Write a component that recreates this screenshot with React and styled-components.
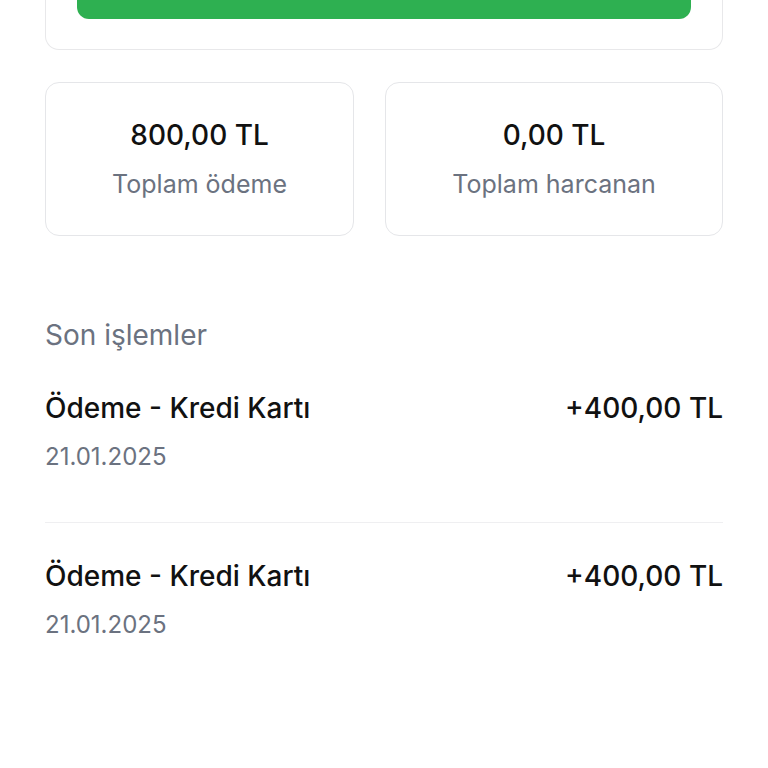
import React from 'react';
import styled, { createGlobalStyle } from 'styled-components';

const GlobalStyle = createGlobalStyle`
  body {
    margin: 0;
    background: #ffffff;
    font-family: Inter, "Noto Sans", sans-serif;
    color: #111111;
  }
`;

const Page = styled.div`
  padding: 0 45px;
  overflow: hidden;
  height: 768px;
  box-sizing: border-box;
`;

const TopCard = styled.div`
  margin-top: -60px;
  padding: 24px 31px 30px;
  border: 1.5px solid #e8e8ea;
  border-top: none;
  border-radius: 0 0 14px 14px;
`;

const PayButton = styled.div`
  height: 55px;
  border-radius: 12px;
  background: #2eb051;
`;

const Stats = styled.div`
  display: flex;
  gap: 31px;
  margin-top: 32px;
`;

const StatCard = styled.div`
  flex: ${(p) => p.$grow} 1 0;
  height: 154px;
  box-sizing: border-box;
  border: 1.5px solid #e5e6e9;
  border-radius: 14px;
  display: flex;
  flex-direction: column;
  align-items: center;
  justify-content: center;
  gap: 12px;
`;

const StatValue = styled.div`
  font-size: 28px;
  font-weight: 500;
  color: #111111;
  line-height: 38px;
`;

const StatLabel = styled.div`
  font-size: 25px;
  color: #6b7280;
  line-height: 36px;
`;

const SectionTitle = styled.div`
  margin-top: 80px;
  font-size: 28px;
  color: #6b7280;
  line-height: 38px;
`;

const List = styled.div`
  margin-top: 36px;
`;

const Row = styled.div`
  display: flex;
  justify-content: space-between;
  align-items: flex-start;
  padding: ${(p) => (p.$first ? '0' : '35px')} 0 48px;
  border-bottom: ${(p) => (p.$last ? 'none' : '1.5px solid #efeff1')};
`;

const RowMain = styled.div`
  display: flex;
  flex-direction: column;
  gap: 14px;
`;

const RowTitle = styled.div`
  font-size: 28px;
  font-weight: 500;
  color: #111111;
  line-height: 36px;
`;

const RowDate = styled.div`
  font-size: 24px;
  color: #6b7280;
  line-height: 34px;
`;

const Amount = styled.div`
  font-size: 28px;
  font-weight: 500;
  color: #111111;
  line-height: 36px;
`;

const transactions = [
  { title: 'Ödeme - Kredi Kartı', date: '21.01.2025', amount: '+400,00 TL' },
  { title: 'Ödeme - Kredi Kartı', date: '21.01.2025', amount: '+400,00 TL' },
];

const App = () => {
  return (
    <>
      <GlobalStyle />
      <Page>
        <TopCard>
          <PayButton />
        </TopCard>
        <Stats>
          <StatCard $grow={309}>
            <StatValue>800,00 TL</StatValue>
            <StatLabel>Toplam ödeme</StatLabel>
          </StatCard>
          <StatCard $grow={338}>
            <StatValue>0,00 TL</StatValue>
            <StatLabel>Toplam harcanan</StatLabel>
          </StatCard>
        </Stats>
        <SectionTitle>Son işlemler</SectionTitle>
        <List>
          {transactions.map((t, i) => (
            <Row key={i} $first={i === 0} $last={i === transactions.length - 1}>
              <RowMain>
                <RowTitle>{t.title}</RowTitle>
                <RowDate>{t.date}</RowDate>
              </RowMain>
              <Amount>{t.amount}</Amount>
            </Row>
          ))}
        </List>
      </Page>
    </>
  );
};

export default App;
